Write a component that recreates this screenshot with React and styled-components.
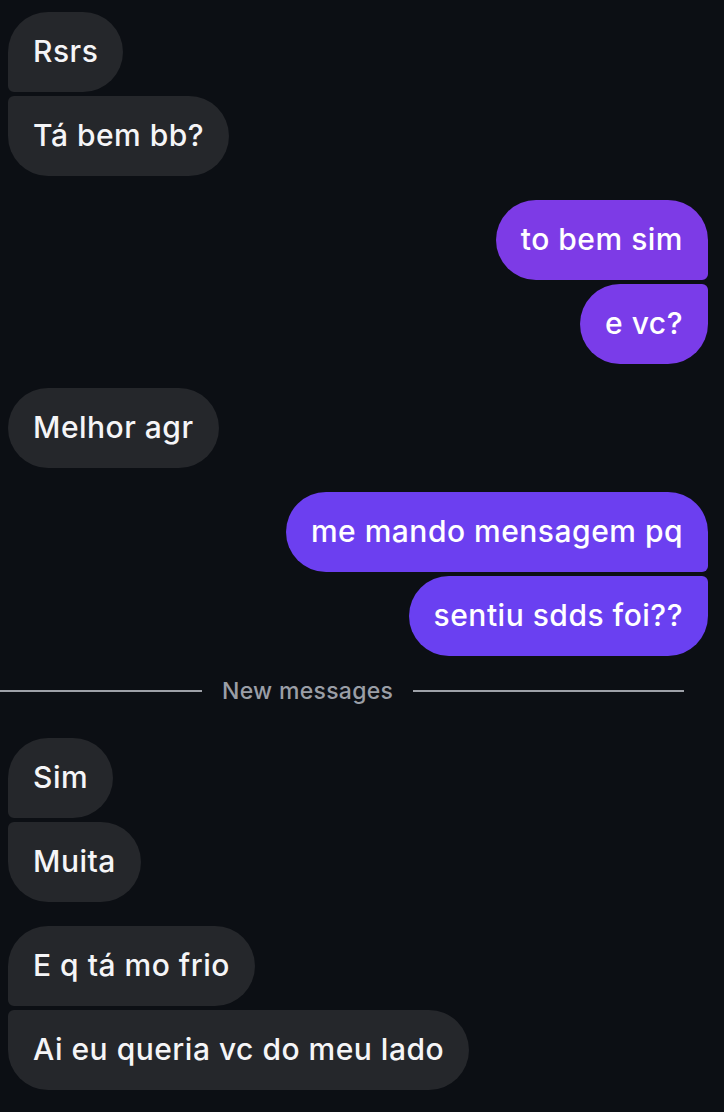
import React from 'react';
import styled, { createGlobalStyle, css } from 'styled-components';

const BIG = '40px';
const SMALL = '6px';

const GlobalStyle = createGlobalStyle`
  html, body {
    margin: 0;
    background: #0c0f14;
  }
  body {
    font-family: Inter, "Noto Sans", sans-serif;
    -webkit-font-smoothing: antialiased;
  }
`;

const Thread = styled.div`
  display: flex;
  flex-direction: column;
  gap: 24px;
  padding: 12px 16px 22px 8px;
  min-height: 1112px;
  box-sizing: border-box;
`;

const Group = styled.div`
  display: flex;
  flex-direction: column;
  gap: 4px;
  align-items: ${(p) => (p.$mine ? 'flex-end' : 'flex-start')};
`;

function corners(mine, pos) {
  // pos: 'first' | 'last' | 'single'
  const top = pos === 'last' ? SMALL : BIG;
  const bottom = pos === 'first' ? SMALL : BIG;
  if (mine) return `${BIG} ${top} ${bottom} ${BIG}`;
  return `${top} ${BIG} ${BIG} ${bottom}`;
}

const Bubble = styled.div`
  box-sizing: border-box;
  height: 80px;
  display: flex;
  align-items: center;
  padding: 0 25px 2px;
  font-size: 30px;
  font-weight: 500;
  letter-spacing: 0.5px;
  color: #f5f5f7;
  white-space: nowrap;
  border-radius: ${(p) => corners(p.$mine, p.$pos)};
  ${(p) =>
    p.$mine
      ? css`
          background: ${p.$tint};
          color: #ffffff;
        `
      : css`
          background: #25272b;
        `}
`;

const Divider = styled.div`
  display: flex;
  align-items: center;
  gap: 20px;
  height: 30px;
  margin: -4px -8px 8px -8px;
  padding-right: 32px;
  font-size: 23px;
  font-weight: 500;
  letter-spacing: 0.3px;
  color: #9a9ea6;
  white-space: nowrap;

  &::before,
  &::after {
    content: '';
    height: 2px;
    background: #9ea1a8;
  }
  &::before {
    flex: 0 0 202px;
  }
  &::after {
    flex: 1;
  }
`;

const groups = [
  { mine: false, msgs: ['Rsrs', 'Tá bem bb?'] },
  { mine: true, msgs: ['to bem sim', 'e vc?'], tints: ['#7d3be6', '#7a3ce9'] },
  { mine: false, msgs: ['Melhor agr'] },
  {
    mine: true,
    msgs: ['me mando mensagem pq', 'sentiu sdds foi??'],
    tints: ['#6c3ff0', '#6a40f1'],
  },
];

const fresh = [
  { mine: false, msgs: ['Sim', 'Muita'] },
  { mine: false, msgs: ['E q tá mo frio', 'Ai eu queria vc do meu lado'] },
];

function MessageGroup({ group }) {
  const n = group.msgs.length;
  return (
    <Group $mine={group.mine}>
      {group.msgs.map((text, i) => {
        const pos = n === 1 ? 'single' : i === 0 ? 'first' : i === n - 1 ? 'last' : 'mid';
        return (
          <Bubble
            key={text}
            $mine={group.mine}
            $pos={pos}
            $tint={group.tints ? group.tints[i] : undefined}
          >
            {text}
          </Bubble>
        );
      })}
    </Group>
  );
}

export default function App() {
  return (
    <>
      <GlobalStyle />
      <Thread>
        {groups.map((g, i) => (
          <MessageGroup key={i} group={g} />
        ))}
        <Divider>New messages</Divider>
        {fresh.map((g, i) => (
          <MessageGroup key={`n${i}`} group={g} />
        ))}
      </Thread>
    </>
  );
}
